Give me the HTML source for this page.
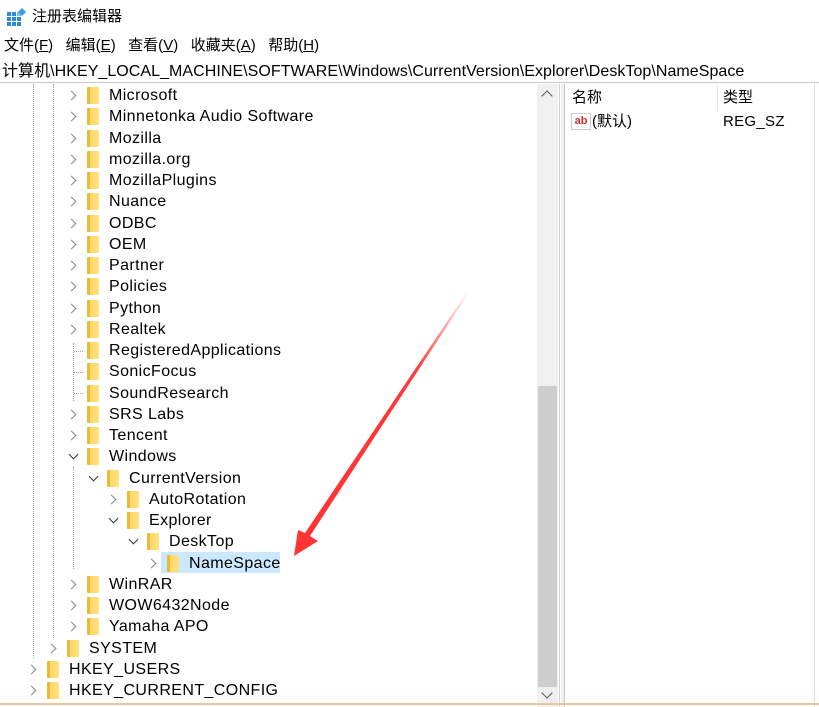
<!DOCTYPE html>
<html><head><meta charset="utf-8"><style>
*{margin:0;padding:0;box-sizing:border-box}
body{width:819px;height:707px;overflow:hidden;background:#fff;font-family:"Liberation Sans","Noto Sans CJK SC",sans-serif;color:#000;position:relative}
.a{position:absolute;white-space:nowrap}
.t{font-size:16px;line-height:20px;letter-spacing:0.4px}
.f{position:absolute;width:12px;height:17px;background:linear-gradient(90deg,#e8b93a 0,#e8b93a 3px,#ffd867 3px,#ffe27f 100%);border-radius:1px}
.ar{position:absolute;width:7px;height:7px;border-right:1.5px solid #888;border-bottom:1.5px solid #888}
.vl{position:absolute;width:0;border-left:1px dotted #a0a0a0}
.hl{position:absolute;height:0;width:9px;border-top:1px dotted #a0a0a0}
</style></head><body>
<svg class="a" style="left:7px;top:8px" width="20" height="18" viewBox="0 0 20 18"><g fill="#2a8ad8"><rect x="0" y="4" width="4" height="4"/><rect x="5" y="4" width="4" height="4"/><rect x="0" y="9" width="4" height="4"/><rect x="5" y="9" width="4" height="4"/><rect x="10" y="9" width="4" height="4"/><rect x="0" y="14" width="4" height="4"/><rect x="5" y="14" width="4" height="4"/><rect x="10" y="14" width="4" height="4"/><rect x="10" y="4" width="4" height="4" fill="#7cc0f0"/></g><path d="M15 0l4 4-4 4-4-4z" fill="#3a9ae8"/></svg>
<div class="a" style="left:32px;top:6px;font-size:15px;line-height:22px">注册表编辑器</div>
<div class="a" style="left:4px;top:36px;font-size:15px;line-height:20px">文件(<u>F</u>)&nbsp;&nbsp;&nbsp;编辑(<u>E</u>)&nbsp;&nbsp;&nbsp;查看(<u>V</u>)&nbsp;&nbsp;&nbsp;收藏夹(<u>A</u>)&nbsp;&nbsp;&nbsp;帮助(<u>H</u>)</div>
<div class="a" style="left:0;top:60px;width:819px;height:23px;border-bottom:1px solid #c8c8c8"></div>
<div class="a" style="left:2px;top:61px;font-size:16px;line-height:21px;letter-spacing:0.05px">计算机\HKEY_LOCAL_MACHINE\SOFTWARE\Windows\CurrentVersion\Explorer\DeskTop\NameSpace</div>
<div class="a" style="left:537px;top:84px;width:21px;height:623px;background:#f0f0f0"></div>
<div class="a" style="left:538px;top:386px;width:19px;height:301px;background:#cdcdcd"></div>
<div class="a" style="left:543px;top:92px;width:8px;height:8px;border-left:1.5px solid #555;border-top:1.5px solid #555;transform:rotate(45deg)"></div>
<div class="a" style="left:543px;top:689px;width:8px;height:8px;border-right:1.5px solid #555;border-bottom:1.5px solid #555;transform:rotate(45deg)"></div>
<div class="a" style="left:559px;top:84px;width:1px;height:623px;background:#d0d0d0"></div>
<div class="a" style="left:561px;top:84px;width:3px;height:623px;background:#f0f0f0"></div>
<div class="a" style="left:564px;top:84px;width:1px;height:623px;background:#c8c8c8"></div>
<div class="a" style="left:814px;top:84px;width:1px;height:623px;background:#e0e0e0"></div>
<div class="a" style="left:717px;top:86px;width:1px;height:24px;background:#e5e5e5"></div>
<div class="a" style="left:572px;top:88px;font-size:15px;line-height:20px">名称</div>
<div class="a" style="left:723px;top:88px;font-size:15px;line-height:20px">类型</div>
<div class="a" style="left:571px;top:113px;width:20px;height:17px;border:1px solid #ccc;background:#fff;font-size:11px;line-height:14px;color:#d03030;font-weight:bold;text-align:center">ab</div>
<div class="a" style="left:592px;top:112px;font-size:15px;line-height:20px">(默认)</div>
<div class="a" style="left:723px;top:112px;font-size:15px;line-height:20px;letter-spacing:0.3px">REG_SZ</div>
<div class="vl" style="left:33px;top:84px;height:574px"></div>
<div class="vl" style="left:53px;top:84px;height:554px"></div>
<div class="vl" style="left:73px;top:467px;height:102px"></div>
<div class="vl" style="left:73px;top:343px;height:58px"></div>
<div class="hl" style="left:74px;top:351px"></div>
<div class="hl" style="left:74px;top:372px"></div>
<div class="hl" style="left:74px;top:393px"></div>
<div class="a" style="left:161px;top:552px;width:119px;height:21px;background:#cce8ff"></div>
<div id="tree"></div>
<script>
var rows=[["Microsoft",2,">"],["Minnetonka Audio Software",2,">"],["Mozilla",2,">"],["mozilla.org",2,">"],["MozillaPlugins",2,">"],["Nuance",2,">"],["ODBC",2,">"],["OEM",2,">"],["Partner",2,">"],["Policies",2,">"],["Python",2,">"],["Realtek",2,">"],["RegisteredApplications",2,""],["SonicFocus",2,""],["SoundResearch",2,""],["SRS Labs",2,">"],["Tencent",2,">"],["Windows",2,"v"],["CurrentVersion",3,"v"],["AutoRotation",4,">"],["Explorer",4,"v"],["DeskTop",5,"v"],["NameSpace",6,">"],["WinRAR",2,">"],["WOW6432Node",2,">"],["Yamaha APO",2,">"],["SYSTEM",1,">"],["HKEY_USERS",0,">"],["HKEY_CURRENT_CONFIG",0,">"]];
var h="";
rows.forEach(function(r,i){var cy=96+21.25*i;var x0=r[1]*20;
if(r[2]==">")h+='<div class="ar" style="left:'+(x0+28)+'px;top:'+(cy-4)+'px;transform:rotate(-45deg)"></div>';
if(r[2]=="v")h+='<div class="ar" style="left:'+(x0+30)+'px;top:'+(cy-6)+'px;transform:rotate(45deg);border-color:#333"></div>';
h+='<div class="f" style="left:'+(x0+47)+'px;top:'+(cy-9)+'px"></div>';
h+='<div class="a t" style="left:'+(x0+69)+'px;top:'+(cy-10)+'px">'+r[0]+'</div>';});
document.getElementById("tree").innerHTML=h;
</script>
<div class="a" style="left:0;top:703px;width:819px;height:2px;background:#e8c898"></div>
<svg class="a" style="left:0;top:0" width="819" height="707"><defs><linearGradient id="g" x1="469" y1="290" x2="294" y2="555" gradientUnits="userSpaceOnUse"><stop offset="0" stop-color="#ff4040" stop-opacity="0"/><stop offset="0.3" stop-color="#ff3838"/><stop offset="1" stop-color="#ff3333"/></linearGradient></defs><polygon points="469,289 470,291 310,536 318,541 294,556 298,530 305,533" fill="url(#g)"/></svg>
</body></html>
